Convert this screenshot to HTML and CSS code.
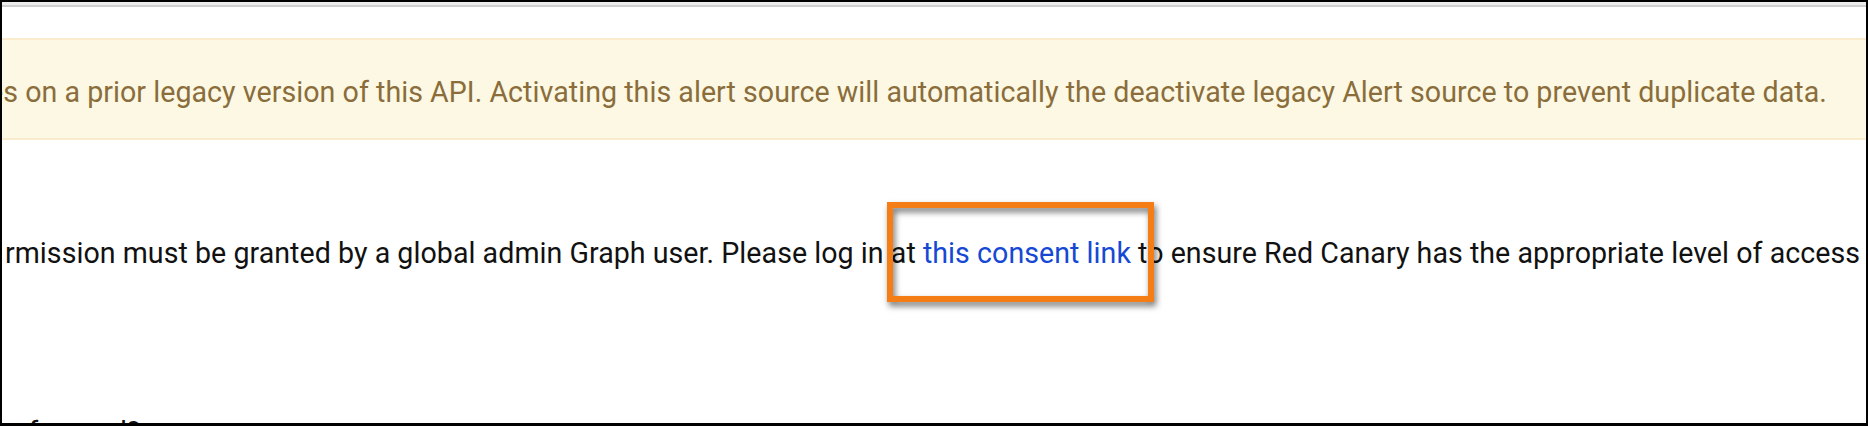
FILE: index.html
```html
<!DOCTYPE html>
<html>
<head>
    <link rel="stylesheet" href="styles.css">
</head>
<body>

<div class="frame">
    <div class="topbar"></div>

    <div class="alert">
        <p class="alert-text">es on a prior legacy version of this API. Activating this alert source will automatically the deactivate legacy Alert source to prevent duplicate data.</p>
    </div>

    <p class="consent">rmission must be granted by a global admin Graph user. Please log in at <a href="#">this consent link</a> to ensure Red Canary has the appropriate level of access</p>

    <p class="next-question">of record?</p>

    <!-- annotation drawn over the screenshot -->
    <div class="callout"></div>
</div>

</body>
</html>
```

FILE: styles.css
```css
body {
    margin: 0;
    font-family: Roboto, "Liberation Sans", Arial, sans-serif;
    background: #fff;
}

.frame {
    position: relative;
    box-sizing: border-box;
    width: 1868px;
    height: 426px;
    border: 2px solid #000;
    border-bottom-width: 3px;
    overflow: hidden;
    background: #fff;
}

.topbar {
    height: 3px;
    background: #ececec;
    border-bottom: 2px solid #cfcfcf;
}

.alert {
    display: flex;
    align-items: center;
    box-sizing: border-box;
    height: 102px;
    margin-top: 31px;
    padding-top: 6px;
    background-color: #fcf8e3;
    border-top: 2px solid #faebcc;
    border-bottom: 2px solid #faebcc;
}

.alert-text {
    margin: 0;
    white-space: nowrap;
    font-size: 28.6px;
    letter-spacing: 0.04px;
    color: #8a6d3b;
    text-indent: -14px;
}

.consent {
    margin: 95px 0 0;
    padding-left: 3px;
    white-space: nowrap;
    font-size: 28.6px;
    letter-spacing: 0.04px;
    line-height: 36px;
    color: #111;
}

.consent a {
    color: #1549d4;
    text-decoration: none;
}

.next-question {
    margin: 143px 0 0;
    padding-left: 10px;
    white-space: nowrap;
    font-size: 28.6px;
    line-height: 36px;
    color: #111;
}

.callout {
    position: absolute;
    left: 885px;
    top: 200px;
    width: 255px;
    height: 88px;
    border: 6px solid #f47d16;
    filter: drop-shadow(2px 4px 3px rgba(0, 0, 0, 0.55));
}
```
